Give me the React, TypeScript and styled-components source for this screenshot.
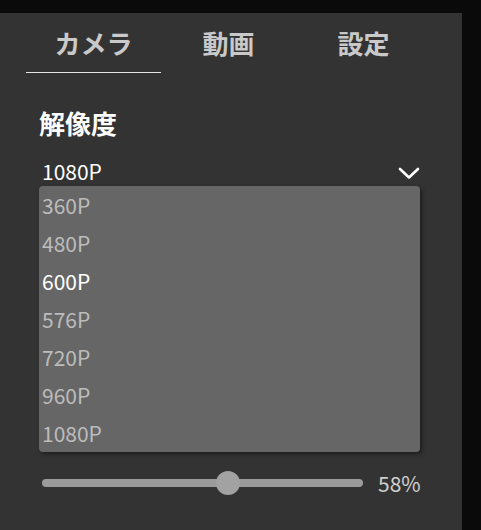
import styled, { createGlobalStyle } from "styled-components";
import { useState } from "react";

const GlobalStyle = createGlobalStyle`
    html, body {
        margin: 0;
        padding: 0;
        background: #0a0a0a;
    }
    body {
        font-family: "Noto Sans CJK JP", "Noto Sans", sans-serif;
    }
`

const tabs = ["カメラ", "動画", "設定"];
const resolutions = ["360P", "480P", "600P", "576P", "720P", "960P", "1080P"];

export default function App() {
    // Выбранная вкладка и подсвеченный пункт списка
    const [activeTab, setActiveTab] = useState(0);
    const [hovered] = useState("600P");
    const [value] = useState(58);

    return (
        <>
            <GlobalStyle />
            <Panel>
                <TabBar>
                    {tabs.map((tab, i) => (
                        <Tab key={tab} active={i === activeTab} onClick={() => setActiveTab(i)}>
                            {tab}
                        </Tab>
                    ))}
                </TabBar>

                <Content>
                    <Label>解像度</Label>
                    <SelectRow>
                        <span>1080P</span>
                        <svg width="22" height="14" viewBox="0 0 22 14">
                            <polyline points="2,3 11,11.5 20,3" fill="none" stroke="#fff" strokeWidth="2.6" strokeLinecap="round" strokeLinejoin="round" />
                        </svg>
                    </SelectRow>

                    {/* Открытый список разрешений */}
                    <OptionList>
                        {resolutions.map(r => (
                            <Option key={r} highlighted={r === hovered}>{r}</Option>
                        ))}
                    </OptionList>

                    <SliderRow>
                        <Track>
                            <Thumb style={{ left: `${value}%` }} />
                        </Track>
                        <Percent>{value}%</Percent>
                    </SliderRow>
                </Content>
            </Panel>
        </>
    );
}

interface TabProps {
    active: boolean,
}

interface OptionProps {
    highlighted: boolean,
}

// Основная панель
const Panel = styled.div`
    width: 462px;
    margin-top: 13px;
    min-height: calc(100vh - 13px);
    background: #333333;
    box-sizing: border-box;
    padding: 0 42px 0 26px;
`

const TabBar = styled.div`
    display: flex;
`

const Tab = styled.div<TabProps>`
    flex: 0 0 135px;
    height: 60px;
    box-sizing: border-box;
    display: flex;
    justify-content: center;
    align-items: center;
    font-size: 26px;
    font-weight: 700;
    color: #c9c9c9;
    border-bottom: 1px solid ${p => p.active ? "#e6e6e6" : "transparent"};
    cursor: pointer;
    user-select: none;
`

const Content = styled.div`
    display: flex;
    flex-direction: column;
    padding: 32px 0 0 13px;
`

const Label = styled.div`
    font-size: 26px;
    font-weight: 700;
    line-height: 36px;
    color: #ffffff;
`

const SelectRow = styled.div`
    display: flex;
    justify-content: space-between;
    align-items: center;
    height: 30px;
    margin-top: 15px;
    padding-left: 3px;
    font-size: 21px;
    color: #ffffff;
    svg {
        margin-top: 3px;
    }
`

const OptionList = styled.div`
    background: #666666;
    border-radius: 4px;
    box-shadow: 2px 2px 4px rgba(0, 0, 0, 0.45);
    display: flex;
    flex-direction: column;
`

const Option = styled.div<OptionProps>`
    height: 38px;
    line-height: 38px;
    padding-left: 3px;
    font-size: 21px;
    color: ${p => p.highlighted ? "#ffffff" : "#bcbcbc"};
`

const SliderRow = styled.div`
    display: flex;
    align-items: center;
    gap: 15px;
    height: 24px;
    margin-top: 19px;
    padding-left: 3px;
`

const Track = styled.div`
    position: relative;
    flex: 0 0 321px;
    height: 8px;
    border-radius: 4px;
    background: #9b9b9b;
`

const Thumb = styled.div`
    position: absolute;
    top: 50%;
    width: 24px;
    height: 24px;
    border-radius: 50%;
    background: #a2a2a2;
    transform: translate(-50%, -50%);
`

const Percent = styled.div`
    font-size: 21px;
    color: #cfcfcf;
`
